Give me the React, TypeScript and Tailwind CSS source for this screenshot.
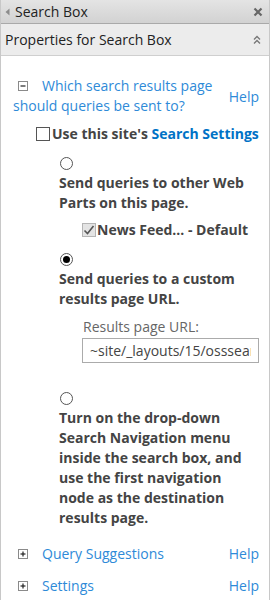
import { useState } from "react";

const font = { fontFamily: '"Open Sans", "Noto Sans", sans-serif' };

const Box = ({ sign }: { sign: "+" | "-" }) => (
  <span className="inline-flex h-[10px] w-[10px] items-center justify-center border border-[#8a8a8a] bg-white align-middle">
    <svg width="6" height="6" viewBox="0 0 6 6">
      <path d="M0.5 3h5" stroke="#222" strokeWidth="1.2" />
      {sign === "+" && <path d="M3 0.5v5" stroke="#222" strokeWidth="1.2" />}
    </svg>
  </span>
);

const Radio = ({ on }: { on?: boolean }) => (
  <span className="flex h-[13px] w-[13px] items-center justify-center rounded-full border border-[#555] bg-white">
    {on && <span className="h-[7px] w-[7px] rounded-full bg-black" />}
  </span>
);

const App = () => {
  const [url, setUrl] = useState("~site/_layouts/15/osssearchresults.aspx");

  return (
    <div
      className="flex h-[600px] w-[270px] flex-col overflow-hidden border-x border-[#c8c8c8] bg-white"
      style={font}
    >
      <div className="flex h-[24px] shrink-0 items-center justify-between border-b border-[#a9a9a9] bg-gradient-to-b from-[#e4e4e4] to-[#d2d2d2] pl-[4px] pr-[6px]">
        <div className="flex items-center gap-[5px]">
          <svg width="5" height="8" viewBox="0 0 5 8">
            <path d="M4.5 0.5L0.5 4l4 3.5z" fill="#8c8c8c" />
          </svg>
          <span className="text-[14px] text-[#222]">Search Box</span>
        </div>
        <svg width="10" height="10" viewBox="0 0 10 10">
          <path d="M1.5 1.5l7 7M8.5 1.5l-7 7" stroke="#666" strokeWidth="2.2" />
        </svg>
      </div>

      <div className="flex h-[32px] shrink-0 items-center justify-between border-b border-[#cfcfcf] bg-[#ececec] pl-[4px] pr-[8px]">
        <span className="text-[14px] text-[#222]">Properties for Search Box</span>
        <svg width="8" height="10" viewBox="0 0 8 10">
          <path d="M1 4.5L4 1.5l3 3M1 8.5L4 5.5l3 3" fill="none" stroke="#777" strokeWidth="1.4" />
        </svg>
      </div>

      <div className="flex shrink-0 flex-col pt-[20px]">
        <div className="flex items-center pr-[10px]">
          <div className="flex-1 pl-[12px] text-[14px] leading-[20px] text-[#2e8ad8]">
            <span className="relative -top-[1px] mx-[5px]">
              <Box sign="-" />
            </span>
            <span className="ml-[9px]">Which search results page should queries be sent to?</span>
          </div>
          <span className="text-[14px] text-[#2e8ad8]">Help</span>
        </div>

        <label className="mt-[7px] flex items-center pl-[35px] text-[14px] font-bold text-[#444]">
          <span className="h-[14px] w-[14px] shrink-0 border border-[#555] bg-white" />
          <span className="ml-[2px] whitespace-nowrap">
            Use this site's <span className="text-[#0072c6]">Search Settings</span>
          </span>
        </label>

        <div className="flex flex-col pl-[58px] text-[14px] font-bold leading-[20px] text-[#444]">
          <div className="mt-[13px] pl-[1px]">
            <Radio />
          </div>
          <div className="mt-[3px] pr-[10px]">Send queries to other Web Parts on this page.</div>
          <div className="mt-[7px] flex items-center pl-[23px]">
            <span className="flex h-[14px] w-[14px] items-center justify-center border border-[#b5b5b5] bg-[#e4e4e4]">
              <svg width="12" height="10" viewBox="0 0 12 10">
                <path d="M1.5 5.5l3 3 6-7.5" fill="none" stroke="#555" strokeWidth="1.6" />
              </svg>
            </span>
            <span className="ml-[1px]">News Feed... - Default</span>
          </div>
          <div className="mt-[13px] pl-[1px]">
            <Radio on />
          </div>
          <div className="mt-[3px] pr-[10px]">Send queries to a custom results page URL.</div>
          <div className="mt-[8px] pl-[24px] text-[14px] font-normal text-[#666]">Results page URL:</div>
          <div className="mt-[1px] pl-[23px] pr-[10px]">
            <input
              value={url}
              onChange={(e) => setUrl(e.target.value)}
              className="h-[25px] w-full border border-[#ababab] px-[7px] text-[14px] font-normal text-[#444] outline-none"
              style={font}
            />
          </div>
          <div className="mt-[29px] pl-[1px]">
            <Radio />
          </div>
          <div className="mt-[3px] pr-[10px]">
            Turn on the drop-down Search Navigation menu inside the search box, and use the first
            navigation node as the destination results page.
          </div>
        </div>

        <div className="mt-[15px] flex items-center justify-between pl-[17px] pr-[10px] text-[14px] text-[#2e8ad8]">
          <div className="flex items-center">
            <Box sign="+" />
            <span className="ml-[14px]">Query Suggestions</span>
          </div>
          <span>Help</span>
        </div>
        <div className="mt-[11px] flex items-center justify-between pl-[17px] pr-[10px] text-[14px] text-[#2e8ad8]">
          <div className="flex items-center">
            <Box sign="+" />
            <span className="ml-[14px]">Settings</span>
          </div>
          <span>Help</span>
        </div>
      </div>
    </div>
  );
};

export default App;
